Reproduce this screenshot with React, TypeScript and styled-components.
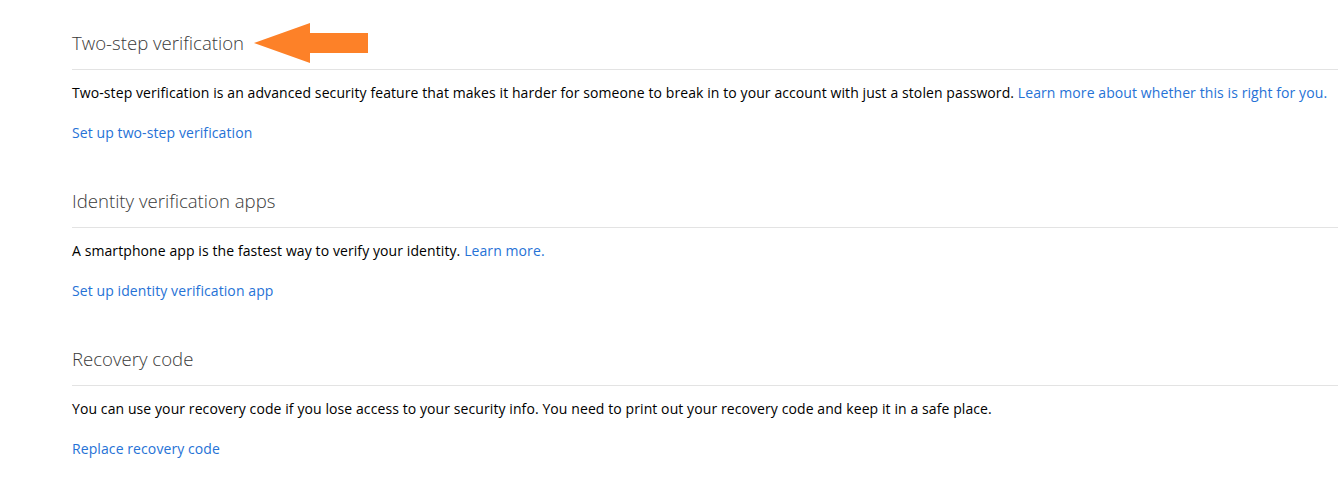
import styled, { createGlobalStyle } from 'styled-components';

const GlobalStyle = createGlobalStyle`
  body {
    margin: 0;
    background: #ffffff;
    font-family: "Open Sans", "Noto Sans", sans-serif;
  }
`;

const Page = styled.main`
  padding: 29px 0 0 72px;
`;

const Section = styled.section`
  margin-bottom: 44px;
`;

const HeadingRow = styled.div`
  display: flex;
  align-items: center;
  height: 28px;
  padding-bottom: 12px;
  border-bottom: 1px solid #e3e3e3;
`;

const Heading = styled.h2`
  margin: 0;
  font-size: 18.6px;
  font-weight: 300;
  line-height: 28px;
  color: #3a3a3a;
`;

const Arrow = styled.svg`
  margin-left: 10px;
  flex-shrink: 0;
`;

const Text = styled.p`
  margin: 13px 0 0;
  font-size: 14px;
  line-height: 20px;
  letter-spacing: 0.09px;
  color: #000000;
`;

const Link = styled.a`
  color: #2672d6;
  text-decoration: none;
`;

const Action = styled.a`
  display: block;
  margin-top: 20px;
  font-size: 14px;
  line-height: 20px;
  letter-spacing: 0.09px;
  color: #2672d6;
  text-decoration: none;
`;

type Item = {
  title: string;
  text: string;
  more?: string;
  action: string;
  arrow?: boolean;
};

const items: Item[] = [
  {
    title: 'Two-step verification',
    text: 'Two-step verification is an advanced security feature that makes it harder for someone to break in to your account with just a stolen password.',
    more: 'Learn more about whether this is right for you.',
    action: 'Set up two-step verification',
    arrow: true,
  },
  {
    title: 'Identity verification apps',
    text: 'A smartphone app is the fastest way to verify your identity.',
    more: 'Learn more.',
    action: 'Set up identity verification app',
  },
  {
    title: 'Recovery code',
    text: 'You can use your recovery code if you lose access to your security info. You need to print out your recovery code and keep it in a safe place.',
    action: 'Replace recovery code',
  },
];

function App() {
  return (
    <>
      <GlobalStyle />
      <Page>
        {items.map((item) => (
          <Section key={item.title}>
            <HeadingRow>
              <Heading>{item.title}</Heading>
              {item.arrow && (
                <Arrow width="114" height="40" viewBox="0 0 114 40">
                  <polygon points="0,20 56,0 56,10 114,10 114,30 56,30 56,40" fill="#fd8128" />
                </Arrow>
              )}
            </HeadingRow>
            <Text>
              {item.text}
              {item.more && (
                <>
                  {' '}
                  <Link href="#">{item.more}</Link>
                </>
              )}
            </Text>
            <Action href="#">{item.action}</Action>
          </Section>
        ))}
      </Page>
    </>
  );
}

export default App;
